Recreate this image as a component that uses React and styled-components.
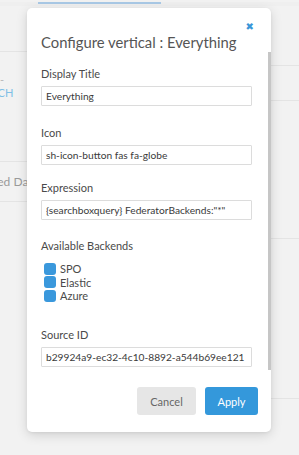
import React from "react"
import styled, { createGlobalStyle } from "styled-components"

const GlobalStyle = createGlobalStyle`
  html, body {
    margin: 0;
    padding: 0;
    background: #f2f2f2;
    font-family: Lato, "Open Sans", sans-serif;
  }
`

const Page = styled.div`
  position: relative;
  width: 299px;
  height: 455px;
  overflow: hidden;
  background: #f2f2f2;
`

const TopStrip = styled.div`
  height: 4px;
  padding-left: 38px;
  background: #efefef;
`

const TabLine = styled.div`
  width: 123px;
  height: 2px;
  margin-top: 2px;
  background: #a9c9e6;
`

const Columns = styled.div`
  display: flex;
`

const Column = styled.div`
  width: ${p => p.w}px;
  display: flex;
  flex-direction: column;
`

const Row = styled.div`
  height: ${p => p.h}px;
  padding-top: ${p => p.pt || 0}px;
  border-bottom: 1px solid #e4e4e4;
  box-sizing: border-box;
  display: flex;
  flex-direction: column;
  justify-content: ${p => p.justify || "flex-start"};
  white-space: nowrap;
`

const SideText = styled.span`
  display: block;
  line-height: 13px;
  color: ${p => p.color || "#9a9a9a"};
  font-size: ${p => p.size || 11}px;
  margin-left: ${p => p.shift || 0}px;
`

const Dialog = styled.div`
  position: absolute;
  left: 27px;
  top: 8px;
  width: 244px;
  height: 424px;
  box-sizing: border-box;
  padding: 14px 19px 17px 14px;
  background: #fff;
  border-radius: 5px;
  box-shadow: 0 3px 12px rgba(0, 0, 0, 0.14), 0 1px 3px rgba(0, 0, 0, 0.06);
  display: flex;
  flex-direction: column;
`

const Close = styled.button`
  position: absolute;
  top: 15px;
  right: 17px;
  border: 0;
  background: none;
  padding: 0;
  color: #3a96d8;
  font-size: 10px;
  font-weight: 900;
  line-height: 8px;
  font-family: "DejaVu Sans", sans-serif;
  cursor: pointer;
`

const Title = styled.h2`
  margin: 10px 0 0;
  font-size: 14.8px;
  font-weight: 400;
  line-height: 20px;
  color: #555;
  white-space: nowrap;
`

const Body = styled.div`
  margin-top: 14px;
  display: flex;
  flex-direction: column;
`

const Field = styled.div`
  display: flex;
  flex-direction: column;
  margin-bottom: ${p => p.mb ?? 19}px;
`

const Label = styled.label`
  font-size: 11px;
  line-height: 15px;
  color: #4a4a4a;
  margin-bottom: ${p => p.mb ?? 5}px;
`

const Input = styled.input`
  box-sizing: border-box;
  width: 211px;
  height: 20px;
  padding: 0 4px;
  border: 1px solid #dcdcdc;
  border-radius: 1px;
  font-family: Lato, sans-serif;
  font-size: 10.2px;
  color: #3a3a3a;
  outline: none;
`

const CheckList = styled.div`
  display: flex;
  flex-direction: column;
  padding-left: 3px;
`

const CheckRow = styled.label`
  display: flex;
  align-items: center;
  gap: 4px;
  height: 13.5px;
  font-size: 11px;
  color: #4a4a4a;
`

const Box = styled.span`
  width: 12px;
  height: 12px;
  border-radius: 3px;
  background: #3a98dc;
  flex: none;
`

const Actions = styled.div`
  margin-top: auto;
  margin-right: -6px;
  display: flex;
  justify-content: flex-end;
  gap: 9px;
`

const Button = styled.button`
  height: 28px;
  width: ${p => p.w}px;
  border: 0;
  border-radius: 3px;
  font-family: Lato, sans-serif;
  font-size: 11px;
  background: ${p => (p.primary ? "#3498db" : "#e6e6e6")};
  color: ${p => (p.primary ? "#fff" : "#666")};
  cursor: pointer;
`

const ScrollThumb = styled.div`
  position: absolute;
  right: 0;
  top: 44px;
  width: 3px;
  height: 318px;
  background: #c6c6c6;
`

const backends = ["SPO", "Elastic", "Azure"]

export default function App() {
  return (
    <Page>
      <GlobalStyle />
      <TopStrip>
        <TabLine />
      </TopStrip>
      <Columns>
        <Column w={150}>
          <Row h={46} />
          <Row h={110} pt={21}>
            <SideText color="#b8b8b8">-</SideText>
            <SideText color="#7fbfe6" shift={-29}>SEARCH</SideText>
          </Row>
          <Row h={40} justify="center">
            <SideText shift={-21} size={12}>Saved Data</SideText>
          </Row>
        </Column>
        <Column w={149}>
          <Row h={60} />
          <Row h={35} />
          <Row h={138} />
          <Row h={160} />
        </Column>
      </Columns>

      <Dialog>
        <Close aria-label="close">✖</Close>
        <Title>Configure vertical : Everything</Title>
        <Body>
          <Field>
            <Label>Display Title</Label>
            <Input defaultValue="Everything" />
          </Field>
          <Field mb={15}>
            <Label>Icon</Label>
            <Input defaultValue="sh-icon-button fas fa-globe" />
          </Field>
          <Field mb={18}>
            <Label>Expression</Label>
            <Input defaultValue={'{searchboxquery} FederatorBackends:"*"'} />
          </Field>
          <Field mb={24}>
            <Label mb={9}>Available Backends</Label>
            <CheckList>
              {backends.map(b => (
                <CheckRow key={b}>
                  <Box />
                  {b}
                </CheckRow>
              ))}
            </CheckList>
          </Field>
          <Field mb={0}>
            <Label>Source ID</Label>
            <Input defaultValue="b29924a9-ec32-4c10-8892-a544b69ee121" />
          </Field>
        </Body>
        <Actions>
          <Button w={59}>Cancel</Button>
          <Button w={53} primary>Apply</Button>
        </Actions>
        <ScrollThumb />
      </Dialog>
    </Page>
  )
}
